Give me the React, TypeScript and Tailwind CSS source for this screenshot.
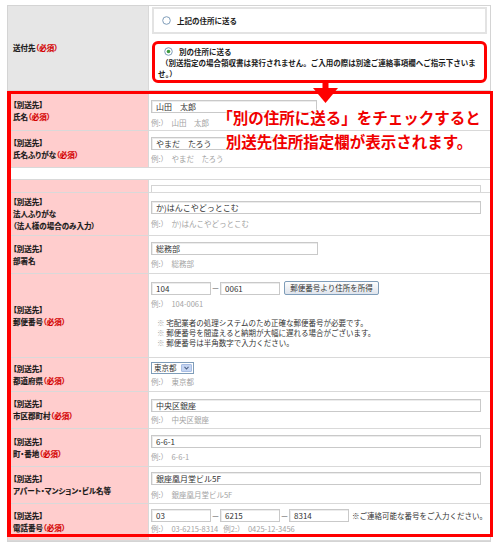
import React from "react";

const FONT = "font-['Noto_Sans_CJK_JP','Noto_Sans',sans-serif]";

const Radio = ({ checked }: { checked?: boolean }) => (
  <svg width="9" height="9" viewBox="0 0 9 9" className="shrink-0">
    <circle cx="4.5" cy="4.5" r="3.8" fill="#fff" stroke="#7f9db9" strokeWidth="1" />
    {checked && <circle cx="4.5" cy="4.5" r="1.8" fill="#3d9a3d" />}
  </svg>
);

const Input = ({ value, w }: { value: string; w: string }) => (
  <div
    className={`${w} h-[13px] shrink-0 border border-[#c9c9c9] bg-white pl-[4px] text-[8px] leading-[11px] text-[#333] shadow-[inset_1px_1px_0_#ececec] whitespace-nowrap overflow-hidden`}
  >
    {value}
  </div>
);

const Example = ({ text, mt }: { text: string; mt: string }) => (
  <div className={`${mt} text-[7.5px] leading-[10px] text-[#a3a3a3] whitespace-nowrap`}>
    例:）&nbsp; {text}
  </div>
);

const Label = ({ name, req, sub }: { name: string; req?: boolean; sub?: string }) => (
  <div className="text-[7.5px] leading-[12px] font-bold text-[#1a1a1a] [font-feature-settings:'palt'] [-webkit-text-stroke:0.15px_currentColor]">
    <div>【別送先】</div>
    <div>
      {name}
      {req && <span className="text-[#d40000]">（必須）</span>}
    </div>
    {sub && <div>{sub}</div>}
  </div>
);

const Row = ({
  h,
  label,
  children,
  pt,
}: {
  h: string;
  label?: React.ReactNode;
  children?: React.ReactNode;
  pt: string;
}) => (
  <div className={`flex ${h} border-b border-[#d9d9d9]`}>
    <div className="w-[141px] shrink-0 bg-[#ffcdcd] border-r border-[#d9d9d9] flex items-center pl-[5px]">
      {label}
    </div>
    <div className={`flex-1 pl-[2px] ${pt}`}>{children}</div>
  </div>
);

const Dash = () => <span className="w-[9px] text-center text-[8px] text-[#666]">－</span>;

export default function App() {
  return (
    <div className={`relative w-[500px] h-[548px] bg-white pt-[5px] pl-[7px] ${FONT}`}>
      <div className="w-[484px] border border-[#d4d4d4]">
        {/* 送付先 */}
        <div className="flex h-[85px] border-b border-[#d9d9d9]">
          <div className="w-[141px] shrink-0 bg-[#e6e6e6] border-r border-[#d9d9d9] flex items-center pl-[5px]">
            <span className="text-[7.5px] font-bold text-[#1a1a1a] [font-feature-settings:'palt'] [-webkit-text-stroke:0.15px_currentColor]">
              送付先<span className="text-[#d40000]">（必須）</span>
            </span>
          </div>
          <div className="flex-1 pl-[3px] pr-[3px] pt-[1px]">
            <div className="h-[27px] border-2 border-[#e3e3e3] flex items-center gap-[6px] pl-[8px]">
              <Radio />
              <span className="text-[7.5px] font-bold text-[#1a1a1a]">上記の住所に送る</span>
            </div>
            <div className="mt-[7px] h-[42px] rounded-[6px] border-[3px] border-[#ff0000] pl-[3px] pt-[2px] text-[7.5px] font-bold text-[#1a1a1a] leading-[11px]">
              <div className="flex items-center gap-[6px] pl-[6px]">
                <Radio checked />
                <span>別の住所に送る</span>
              </div>
              <div className="pl-[3px] whitespace-nowrap">
                （別送指定の場合領収書は発行されません。ご入用の際は別途ご連絡事項欄へご指示下さいま
              </div>
              <div>せ。）</div>
            </div>
          </div>
        </div>

        <Row h="h-[40px]" pt="pt-[9px]" label={<Label name="氏名" req />}>
          <Input value="山田　太郎" w="w-[166px]" />
          <Example text="山田　太郎" mt="mt-[5px]" />
        </Row>

        <Row h="h-[37px]" pt="pt-[6px]" label={<Label name="氏名ふりがな" req />}>
          <Input value="やまだ　たろう" w="w-[166px]" />
          <Example text="やまだ　たろう" mt="mt-[4px]" />
        </Row>

        <div className="h-[12px] border-b border-[#d9d9d9] bg-white" />

        <div className="flex h-[13px] border-b border-[#d9d9d9]">
          <div className="w-[141px] shrink-0 bg-[#ffcdcd] border-r border-[#d9d9d9]" />
          <div className="flex-1 pl-[2px] pt-[5px]">
            <div className="w-[330px] h-full border-t border-x border-[#d4d4d4]" />
          </div>
        </div>

        <Row
          h="h-[43px]"
          pt="pt-[8px]"
          label={<Label name="法人ふりがな" sub="（法人様の場合のみ入力）" />}
        >
          <Input value="か)はんこやどっとこむ" w="w-[330px]" />
          <Example text="か)はんこやどっとこむ" mt="mt-[5px]" />
        </Row>

        <Row h="h-[38px]" pt="pt-[6px]" label={<Label name="部署名" />}>
          <Input value="総務部" w="w-[167px]" />
          <Example text="総務部" mt="mt-[4px]" />
        </Row>

        <Row h="h-[84px]" pt="pt-[7px]" label={<Label name="郵便番号" req />}>
          <div className="flex items-center h-[14px]">
            <Input value="104" w="w-[60px]" />
            <Dash />
            <Input value="0061" w="w-[60px]" />
            <div className="ml-[4px] w-[95px] h-[14px] rounded-[2px] border border-[#7f9db9] bg-gradient-to-b from-[#fdfdfd] to-[#dfe4ec] text-center text-[7.5px] leading-[12px] text-[#333]">
              郵便番号より住所を所得
            </div>
          </div>
          <Example text="104-0061" mt="mt-[4px]" />
          <div className="mt-[9px] pl-[6px] text-[7.5px] leading-[10px] text-[#333] whitespace-nowrap">
            <div>
              <span className="text-[#aaa]">※</span> 宅配業者の処理システムのため正確な郵便番号が必要です。
            </div>
            <div>
              <span className="text-[#aaa]">※</span> 郵便番号を間違えると納期が大幅に遅れる場合がございます。
            </div>
            <div>
              <span className="text-[#aaa]">※</span> 郵便番号は半角数字で入力ください。
            </div>
          </div>
        </Row>

        <Row h="h-[34px]" pt="pt-[4px]" label={<Label name="都道府県" req />}>
          <div className="flex w-[43px] h-[12px] border border-[#7f9db9] bg-white">
            <span className="flex-1 pl-[2px] text-[7.5px] leading-[10px] text-[#333]">東京都</span>
            <span className="w-[11px] m-[1px] rounded-[1px] bg-[#c5d5f2] border border-[#a8bde3] flex items-center justify-center">
              <svg width="5" height="4" viewBox="0 0 5 4">
                <path d="M0.5 0.8 L2.5 3 L4.5 0.8" stroke="#4d6185" strokeWidth="1.1" fill="none" />
              </svg>
            </span>
          </div>
          <Example text="東京都" mt="mt-[3px]" />
        </Row>

        <Row h="h-[37px]" pt="pt-[7px]" label={<Label name="市区郡町村" req />}>
          <Input value="中央区銀座" w="w-[330px]" />
          <Example text="中央区銀座" mt="mt-[3px]" />
        </Row>

        <Row h="h-[38px]" pt="pt-[6px]" label={<Label name="町・番地" req />}>
          <Input value="6-6-1" w="w-[330px]" />
          <Example text="6-6-1" mt="mt-[4px]" />
        </Row>

        <Row h="h-[37px]" pt="pt-[5px]" label={<Label name="アパート・マンション・ビル名等" />}>
          <Input value="銀座凰月堂ビル5F" w="w-[330px]" />
          <Example text="銀座凰月堂ビル5F" mt="mt-[5px]" />
        </Row>

        <Row h="h-[37px]" pt="pt-[5px]" label={<Label name="電話番号" req />}>
          <div className="flex items-center">
            <Input value="03" w="w-[60px]" />
            <Dash />
            <Input value="6215" w="w-[60px]" />
            <Dash />
            <Input value="8314" w="w-[60px]" />
            <span className="ml-[3px] text-[7.5px] text-[#333] whitespace-nowrap">
              ※ご連絡可能な番号をご入力ください。
            </span>
          </div>
          <div className="mt-[2px] text-[7.5px] leading-[10px] text-[#a3a3a3] whitespace-nowrap">
            例:）&nbsp; 03-6215-8314&nbsp;&nbsp; 例2:）&nbsp; 0425-12-3456
          </div>
        </Row>
      </div>

      {/* highlight frame */}
      <div className="absolute left-[7px] top-[91px] w-[486px] h-[446px] border-[3px] border-l-4 border-[#ff0000] pointer-events-none" />

      {/* arrow */}
      <svg className="absolute left-[313px] top-[82px]" width="25" height="21" viewBox="0 0 25 21">
        <rect x="9.5" y="0" width="6" height="7" fill="#ff0000" />
        <polygon points="0,6 25,6 12.5,21" fill="#ff0000" />
      </svg>

      {/* callout */}
      <div className="absolute left-[199px] top-[105px] w-[300px] text-center text-[15.5px] leading-[24px] font-bold text-[#f00000] whitespace-nowrap [text-shadow:0_0_2px_#fff,0_0_2px_#fff,0_0_3px_#fff]">
        <div>「別の住所に送る」をチェックすると</div>
        <div>別送先住所指定欄が表示されます。</div>
      </div>
    </div>
  );
}
